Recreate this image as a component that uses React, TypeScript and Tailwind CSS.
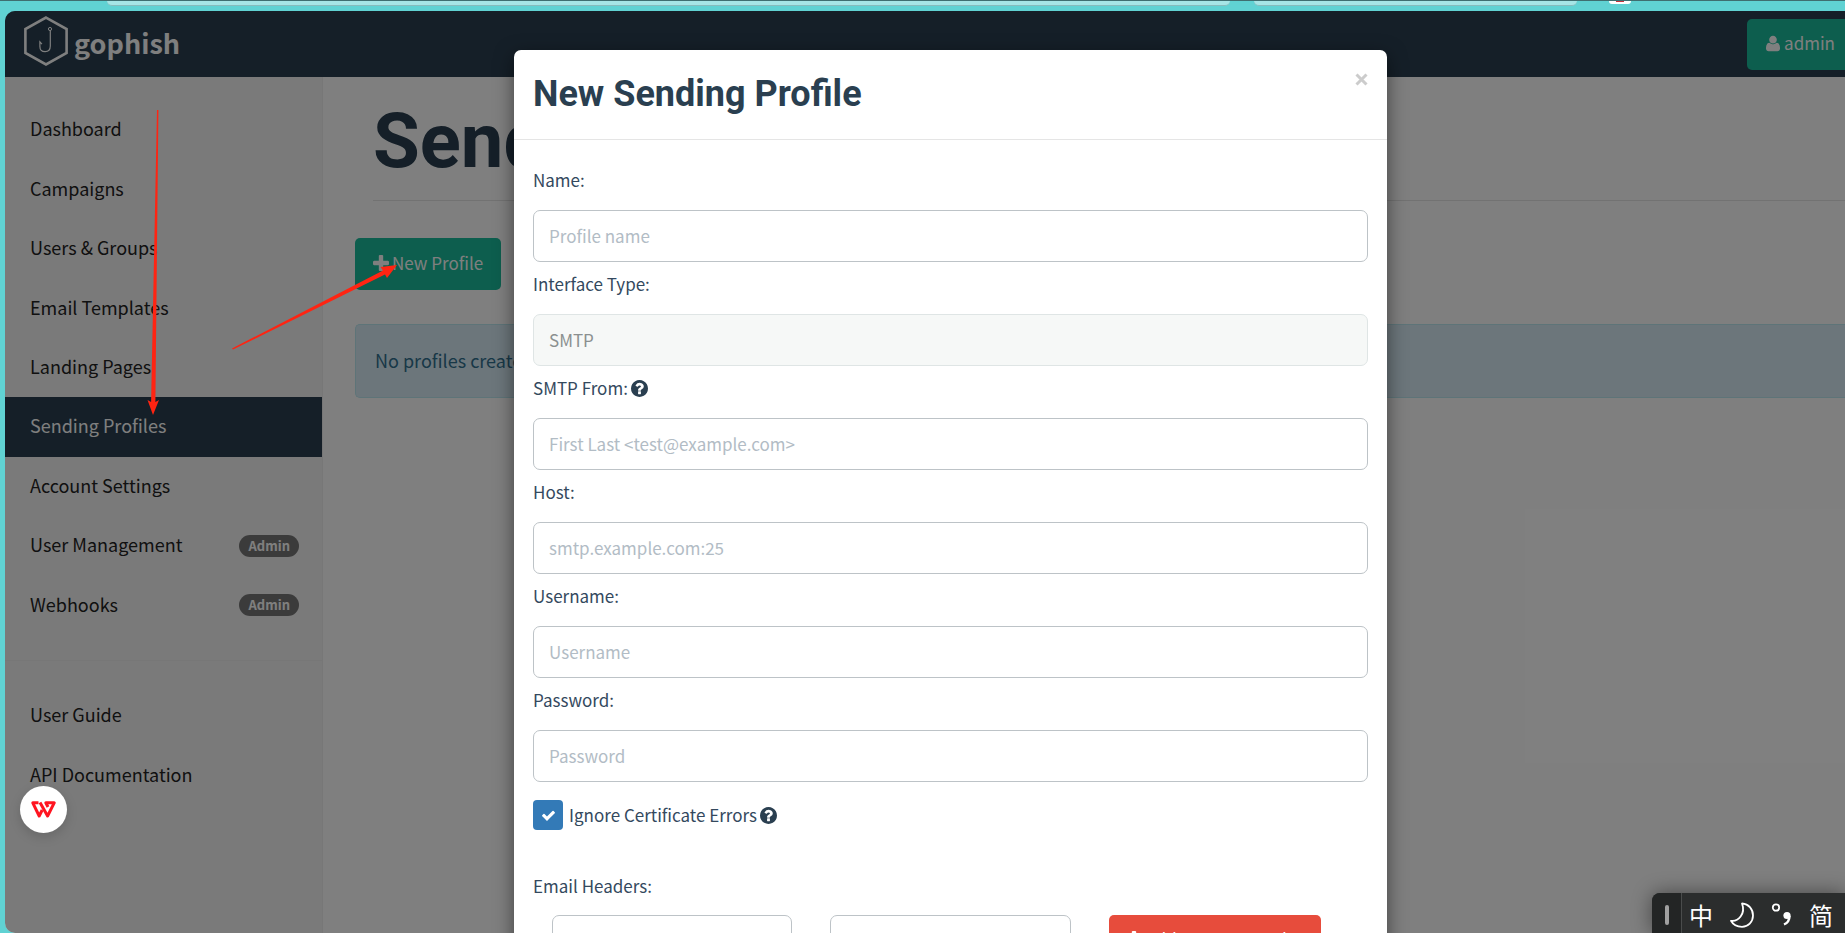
import React from "react";

const ICONS = {
  user: {
    box: "0 128 1408 1536",
    d: "M1408 1405q0 120-73 189.5t-194 69.5h-874q-121 0-194-69.5t-73-189.5q0-53 3.5-103.5t14-109 26.5-108.5 43-97.5 62-81 85.5-53.5 111.5-20q9 0 42 21.5t74.5 48 108 48 133.5 21.5 133.5-21.5 108-48 74.5-48 42-21.5q61 0 111.5 20t85.5 53.5 62 81 43 97.5 26.5 108.5 14 109 3.5 103.5zm-320-893q0 159-112.5 271.5t-271.5 112.5-271.5-112.5-112.5-271.5 112.5-271.5 271.5-112.5 271.5 112.5 112.5 271.5z",
  },
  plus: {
    box: "0 0 1408 1408",
    d: "M1408 608v192q0 40-28 68t-68 28h-416v416q0 40-28 68t-68 28h-192q-40 0-68-28t-28-68v-416h-416q-40 0-68-28t-28-68v-192q0-40 28-68t68-28h416v-416q0-40 28-68t68-28h192q40 0 68 28t28 68v416h416q40 0 68 28t28 68z",
  },
  check: {
    box: "0 0 1792 1792",
    d: "M1671 566q0 40-28 68l-724 724-136 136q-28 28-68 28t-68-28l-136-136-362-362q-28-28-28-68t28-68l136-136q28-28 68-28t68 28l294 295 656-657q28-28 68-28t68 28l136 136q28 28 28 68z",
  },
  help: {
    box: "128 128 1536 1536",
    d: "M1024 1376v-192q0-14-9-23t-23-9h-192q-14 0-23 9t-9 23v192q0 14 9 23t23 9h192q14 0 23-9t9-23zm256-672q0-88-55.5-163t-138.5-116-170-41q-243 0-371 213-15 24 8 42l132 100q7 6 19 6 16 0 25-12 53-68 86-92 34-24 86-24 48 0 85.5 26t37.5 59q0 38-20 61t-68 45q-63 28-115.5 86.5t-52.5 125.5v36q0 14 9 23t23 9h192q14 0 23-9t9-23q0-19 21.5-49.5t54.5-49.5q32-18 49-28.5t46-35 44.5-48 28-60.5 12.5-81zm384 192q0 209-103 385.5t-279.5 279.5-385.5 103-385.5-103-279.5-279.5-103-385.5 103-385.5 279.5-279.5 385.5-103 385.5 103 279.5 279.5 103 385.5z",
  },
};

const Icon = ({
  name,
  className,
}: {
  name: keyof typeof ICONS;
  className: string;
}) => (
  <svg
    viewBox={ICONS[name].box}
    fill="currentColor"
    aria-hidden="true"
    className={className}
  >
    <path d={ICONS[name].d} />
  </svg>
);

const mainLinks = [
  { label: "Dashboard" },
  { label: "Campaigns" },
  { label: "Users & Groups" },
  { label: "Email Templates" },
  { label: "Landing Pages" },
  { label: "Sending Profiles", active: true },
  { label: "Account Settings" },
  { label: "User Management", admin: true },
  { label: "Webhooks", admin: true },
];

const helpLinks = [{ label: "User Guide" }, { label: "API Documentation" }];

const fields = [
  { id: "name", label: "Name:", placeholder: "Profile name" },
  { id: "interface_type", label: "Interface Type:", value: "SMTP" },
  {
    id: "from",
    label: "SMTP From:",
    placeholder: "First Last <test@example.com>",
    help: true,
  },
  { id: "host", label: "Host:", placeholder: "smtp.example.com:25" },
  { id: "username", label: "Username:", placeholder: "Username" },
  {
    id: "password",
    label: "Password:",
    placeholder: "Password",
    type: "password",
  },
];

const NavLink = ({
  label,
  active,
  admin,
}: {
  label: string;
  active?: boolean;
  admin?: boolean;
}) => (
  <li className="flex">
    <a
      href="#"
      className={
        active
          ? "flex flex-1 items-center justify-between bg-[#2a3f50] pr-[23px] pb-[3px] pl-[25px] text-white"
          : "flex flex-1 items-center justify-between pr-[23px] pb-[3px] pl-[25px] text-[#222]"
      }
    >
      {label}
      {admin && (
        <span className="mt-[3px] rounded-full bg-[#777] px-[9px] text-[13px] leading-[22px] font-bold text-white">
          Admin
        </span>
      )}
    </a>
  </li>
);

// bottom edge of the browser's toolbar
const BrowserStrip = () => (
  <div className="flex h-[11px] shrink-0 items-start border-t border-[#3f6e70] pr-[214px] pl-[107px]">
    <div className="h-[5px] flex-1 rounded-b-xl border-b border-[#86bcbd] bg-[#a6e5e6]" />
    <div className="ml-6 h-[5px] w-[323px] rounded-b-xl border-b border-[#86bcbd] bg-[#a6e5e6]" />
    <div className="ml-8 flex h-[3px] w-[22px] justify-center rounded-b-lg bg-white">
      <span className="h-px w-2 bg-[#c8323c]" />
    </div>
  </div>
);

const Navbar = () => (
  <header className="flex h-[66px] shrink-0 items-center justify-between bg-[#2a3f50] pl-[19px]">
    <a href="#" className="flex items-center gap-1.5 text-white">
      <svg
        viewBox="0 0 44 50"
        fill="none"
        stroke="currentColor"
        aria-hidden="true"
        className="mb-[7px] h-[50px] w-11"
      >
        <path d="M22 1.6 42.6 13v24L22 48.4 1.4 37V13Z" strokeWidth="2.6" />
        <circle cx="26" cy="13" r="1.6" strokeWidth="1" />
        <path
          d="M26.3 14.8V30c0 3.6-2 5.6-5.2 5.6s-5.2-2-5.2-5.2v-4.6l2 2.4"
          strokeWidth="1.2"
        />
      </svg>
      <span className="pb-0.5 text-[27px] leading-[40px] font-bold">
        gophish
      </span>
    </a>
    <button
      type="button"
      className="flex h-[51px] items-center gap-1 rounded-l-[5px] bg-[#1abc9c] pr-2.5 pb-0.5 pl-[19px] text-[17px] text-white"
    >
      <Icon name="user" className="h-[17px] w-[14px]" />
      admin
    </button>
  </header>
);

const Sidebar = () => (
  <nav className="w-[318px] shrink-0 border-r border-[#eee] bg-[#f5f5f5] pt-[23px]">
    <ul className="grid h-[535px] auto-rows-fr">
      {mainLinks.map((link) => (
        <NavLink key={link.label} {...link} />
      ))}
    </ul>
    <ul className="mt-[25px] grid h-[145px] auto-rows-fr border-t border-[#eee] pt-[25px]">
      {helpLinks.map((link) => (
        <NavLink key={link.label} {...link} />
      ))}
    </ul>
  </nav>
);

const ProfilesPage = () => (
  <main className="min-w-0 flex-1 bg-white pl-8">
    <h1 className="ml-[18px] border-b border-[#e5e5e5] pt-[23px] pb-[17px] font-[Roboto,sans-serif] text-[76px] leading-[83px] font-bold text-[#2a3f50]">
      Sending Profiles
    </h1>
    <button
      type="button"
      className="mt-[37px] flex h-[52px] items-center gap-[3px] rounded-[5px] bg-[#1abc9c] px-[18px] pb-0.5 text-[17px] text-white"
    >
      <Icon name="plus" className="h-4 w-4" />
      New Profile
    </button>
    <div className="mt-[34px] flex h-[74px] items-center rounded-l-[5px] border border-r-0 border-[#bce8f1] bg-[#d9edf7] pb-0.5 pl-[19px] text-[#31708f]">
      No profiles created yet. Let's create one!
    </div>
  </main>
);

const inputClass =
  "block h-[52px] w-full rounded-[7px] border border-[#bdc3c7] bg-white px-[15px] pb-0.5 text-[#34495e] placeholder:text-[#b2bcc5] disabled:border-[#dfe5e5] disabled:bg-[#f6f8f7] disabled:text-[#8b9090]";

const ProfileModal = () => (
  <div
    role="dialog"
    aria-label="New Sending Profile"
    className="w-full max-w-[873px] self-start rounded-t-[7px] bg-white shadow-[0_6px_19px_rgba(0,0,0,0.5)]"
  >
    <div className="flex h-[90px] items-start justify-between border-b border-[#e5e5e5] px-[19px] pt-5">
      <h2 className="font-[Roboto,sans-serif] text-[36px] leading-[48px] font-bold text-[#2a3f50]">
        New Sending Profile
      </h2>
      <button type="button" aria-label="Close" className="mt-[3px] text-[#ccc]">
        <svg
          viewBox="0 0 13 13"
          stroke="currentColor"
          strokeWidth="3"
          className="h-[13px] w-[13px]"
        >
          <path d="M1.5 1.5l10 10M11.5 1.5l-10 10" />
        </svg>
      </button>
    </div>

    <form className="px-[19px] pt-[18px] text-[17px] leading-[26px] text-[#34495e]">
      {fields.map((field) => (
        <div key={field.id}>
          <label
            htmlFor={field.id}
            className="flex items-center gap-[3px] pt-[9px] pb-[17px]"
          >
            {field.label}
            {field.help && (
              <Icon name="help" className="h-[17px] w-[17px] text-[#2a3f50]" />
            )}
          </label>
          <input
            id={field.id}
            type={field.type || "text"}
            placeholder={field.placeholder}
            defaultValue={field.value}
            disabled={Boolean(field.value)}
            className={inputClass}
          />
        </div>
      ))}

      <label className="mt-[18px] flex items-center gap-[3px]">
        <span className="mr-[3px] grid h-[30px] w-[30px] place-items-center">
          <input
            type="checkbox"
            defaultChecked
            className="col-start-1 row-start-1 h-[30px] w-[30px] appearance-none rounded-[4px] bg-[#337ab7]"
          />
          <Icon
            name="check"
            className="pointer-events-none col-start-1 row-start-1 h-[15px] w-[15px] text-white"
          />
        </span>
        Ignore Certificate Errors
        <Icon name="help" className="h-[17px] w-[17px] text-[#2a3f50]" />
      </label>

      <p className="mt-[43px] mb-4">Email Headers:</p>
      <div className="grid grid-cols-3 gap-x-[38px] px-[19px]">
        <input aria-label="Header name" className={inputClass} />
        <input aria-label="Header value" className={inputClass} />
        <button
          type="button"
          className="flex h-[52px] w-[212px] items-center justify-center gap-[3px] rounded-[5px] bg-[#e74c3c] pb-1 text-white"
        >
          <Icon name="plus" className="h-4 w-4" />
          Add Custom Header
        </button>
      </div>
    </form>
  </div>
);

// hand-drawn pointers on top of the page
const Arrows = () => (
  <svg
    aria-hidden="true"
    fill="#ff2412"
    className="pointer-events-none absolute inset-0 h-full w-full"
  >
    <path d="M157 110h1.400L155.400 402l3.600-2-6 15-5.500-15 3.600 2Z" />
    <path d="M232 348.500 383 270.500 380.500 267 397 265 387 278 385 274.500 233 349.500Z" />
  </svg>
);

const WpsButton = () => (
  <button
    type="button"
    aria-label="WPS"
    className="absolute bottom-[100px] left-5 grid h-[47px] w-[47px] place-items-center rounded-full bg-white shadow-[0_4px_12px_rgba(0,0,0,0.15)]"
  >
    <svg
      viewBox="0 0 25 17"
      fill="none"
      stroke="#ff1420"
      strokeWidth="3"
      strokeLinejoin="round"
      className="h-[17px] w-[25px]"
    >
      <path d="M7.5 1.8H1.8L8.2 15l3-6" />
      <path d="M9 1.5 16.6 15l6.6-13.2h-8.4L17 6" />
    </svg>
  </button>
);

const ImeBar = () => (
  <div className="absolute right-0 bottom-0 flex h-10 items-stretch overflow-hidden rounded-tl-lg bg-[#2b2d2d] text-2xl text-white shadow-[0_0_20px_rgba(0,0,0,0.45)]">
    <div className="flex w-[30px] items-center justify-center border-r border-[#4a4c4c] bg-[#232525]">
      <span className="mt-1 h-5 w-1 rounded-full bg-[#a0a0a0]" />
    </div>
    <div className="flex items-center gap-4 pt-1 pr-3 pl-[7px]">
      <span>中</span>
      <svg
        viewBox="0 0 26 26"
        fill="none"
        stroke="currentColor"
        strokeWidth="1.8"
        strokeLinejoin="round"
        className="h-[26px] w-[26px]"
      >
        <path d="M13 1.5C20 2 24 7.500 24 13.500C24 20 19 24.800 13 24.800C8 24.800 4 22.500 2 18.800C9 20 17 12 13 1.500Z" />
      </svg>
      {/* full-width punctuation indicator */}
      <svg
        viewBox="0 0 22 26"
        fill="none"
        stroke="currentColor"
        strokeWidth="1.8"
        className="h-[26px] w-[22px]"
      >
        <circle cx="5" cy="5.500" r="3.200" />
        <circle cx="16" cy="13.500" r="3.600" fill="currentColor" stroke="none" />
        <path d="M18.500 14C18.500 18.500 16.500 21 13 22.500" strokeWidth="2.400" />
      </svg>
      <span>简</span>
    </div>
  </div>
);

const App = () => {
  return (
    <div className="relative flex h-screen flex-col overflow-hidden bg-[#60d2d3] font-['Noto_Sans_CJK_SC',sans-serif] text-lg leading-[26px]">
      <BrowserStrip />
      <div className="relative ml-[5px] flex min-h-0 flex-1 flex-col overflow-hidden rounded-l-[10px]">
        <Navbar />
        <div className="flex min-h-0 flex-1">
          <Sidebar />
          <ProfilesPage />
        </div>

        {/* backdrop */}
        <div className="absolute inset-0 flex justify-center overflow-hidden bg-black/50 pt-[39px] pl-[51px]">
          <ProfileModal />
        </div>
      </div>
      <Arrows />
      <WpsButton />
      <ImeBar />
    </div>
  );
};

export default App;
